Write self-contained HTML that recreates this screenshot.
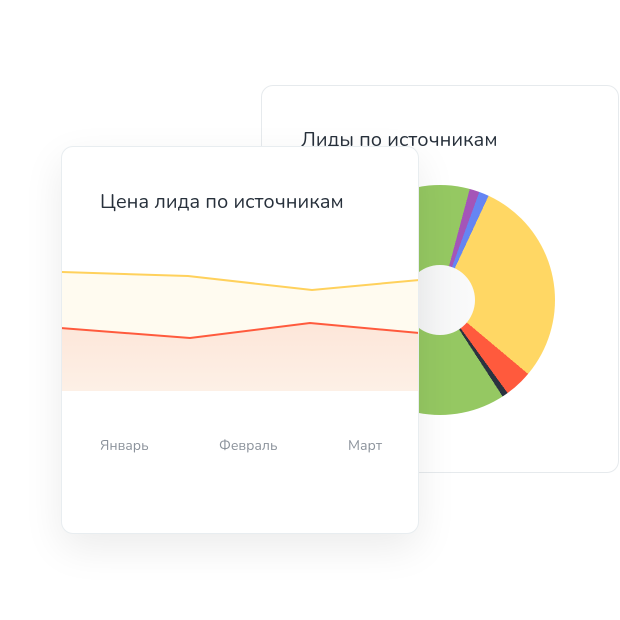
<!DOCTYPE html>
<html><head><meta charset="utf-8"><style>
body{margin:0;width:620px;height:620px;background:#fff;position:relative;overflow:hidden;font-family:"Nunito","Liberation Sans",sans-serif}
.back{position:absolute;left:261px;top:85px;width:356px;height:386px;border:1px solid #e6eaed;border-radius:12px;background:#fff}
.back h2{position:absolute;left:39px;top:41px;margin:0;font-weight:400;font-size:20px;color:#27303b}
.pie{position:absolute;left:325px;top:185px;width:230px;height:230px;border-radius:50%;
background:conic-gradient(#95c862 0deg 15deg,#a455b8 15deg 20deg,#6585f3 20deg 25deg,#ffd764 25deg 130deg,#ff5a3d 130deg 144deg,#2a3340 144deg 147deg,#95c862 147deg 360deg)}
.hole{position:absolute;left:405px;top:265px;width:70px;height:70px;border-radius:50%;background:linear-gradient(90deg,#f3f4f5,#fafafa)}
.front{position:absolute;left:61px;top:146px;width:356px;height:386px;border:1px solid #e8edf0;border-radius:12px;background:#fff;box-shadow:0 14px 40px rgba(0,0,0,0.08);overflow:hidden}
.front h1{position:absolute;left:38px;top:42px;margin:0;font-weight:400;font-size:20px;color:#27303b}
.lbl{position:absolute;top:289px;font-size:14px;color:#8b929b}
</style></head><body>
<div class="back"><h2>Лиды по источникам</h2></div>
<div class="pie"></div><div class="hole"></div>
<div class="front">
<h1>Цена лида по источникам</h1>
<svg width="358" height="388" style="position:absolute;left:-1px;top:-1px">
<defs><linearGradient id="g" x1="0" y1="0" x2="0" y2="1"><stop offset="0" stop-color="#fde6d9"/><stop offset="1" stop-color="#fdf0e6"/></linearGradient></defs>
<polygon points="0,126 127,130 251,144 358,134 358,245 0,245" fill="#fffbf0"/>
<polygon points="0,182 129,192 249,177 358,187 358,245 0,245" fill="url(#g)"/>
<polyline points="0,126 127,130 251,144 358,134" fill="none" stroke="#ffd15c" stroke-width="2"/>
<polyline points="0,182 129,192 249,177 358,187" fill="none" stroke="#ff5a3d" stroke-width="2"/>
</svg>
<div class="lbl" style="left:38px">Январь</div>
<div class="lbl" style="left:157px">Февраль</div>
<div class="lbl" style="left:286px">Март</div>
</div>
</body></html>
